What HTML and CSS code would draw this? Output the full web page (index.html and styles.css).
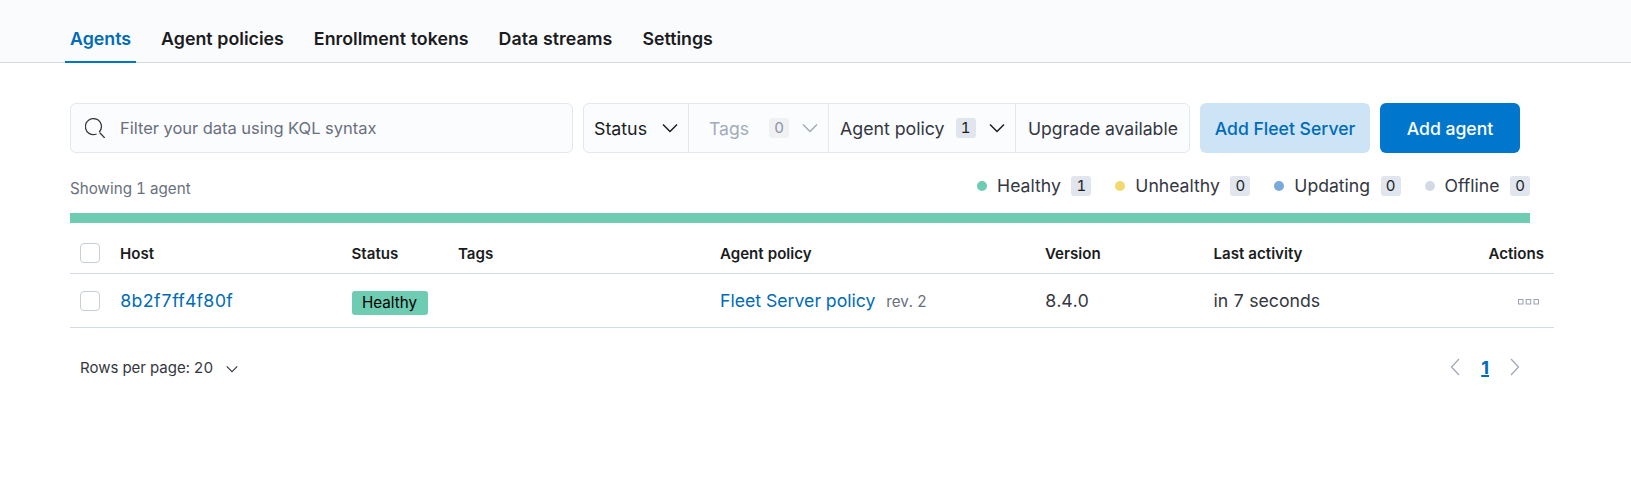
FILE: index.html
```html
<!DOCTYPE html>
<html lang="en">

<head>
  <meta charset="UTF-8">
  <title>Agents - Fleet</title>
  <link rel="stylesheet" href="styles.css">
</head>

<body>
  <nav class="tabs">
    <a class="tab tab-active">Agents</a>
    <a class="tab">Agent policies</a>
    <a class="tab">Enrollment tokens</a>
    <a class="tab">Data streams</a>
    <a class="tab">Settings</a>
  </nav>

  <main class="content">
    <div class="toolbar">
      <div class="search">
        <svg class="search-icon" viewBox="0 0 20 20" fill="none" stroke="#343741" stroke-width="1.3">
          <path d="M14.2 14.2A8 8 0 1 0 11.6 16" />
          <path d="M14.8 14.8l5 5.2" />
        </svg>
        <span class="placeholder">Filter your data using KQL syntax</span>
      </div>
      <div class="filters">
        <div class="filter filter-status"><span>Status</span>
          <svg class="chev" viewBox="0 0 16 10"><path d="M1 1.5l7 7 7-7" /></svg>
        </div>
        <div class="filter filter-tags filter-off"><span>Tags</span><span class="count count-off">0</span>
          <svg class="chev" viewBox="0 0 16 10"><path d="M1 1.5l7 7 7-7" /></svg>
        </div>
        <div class="filter filter-policy"><span>Agent policy</span><span class="count">1</span>
          <svg class="chev" viewBox="0 0 16 10"><path d="M1 1.5l7 7 7-7" /></svg>
        </div>
        <div class="filter filter-upgrade">Upgrade available</div>
      </div>
      <button class="btn btn-light">Add Fleet Server</button>
      <button class="btn btn-primary">Add agent</button>
    </div>

    <div class="summary">
      <span class="showing">Showing 1 agent</span>
      <div class="legend">
        <span class="legend-item"><i class="dot dot-green"></i>Healthy<b class="count">1</b></span>
        <span class="legend-item"><i class="dot dot-yellow"></i>Unhealthy<b class="count">0</b></span>
        <span class="legend-item"><i class="dot dot-blue"></i>Updating<b class="count">0</b></span>
        <span class="legend-item"><i class="dot dot-grey"></i>Offline<b class="count">0</b></span>
      </div>
    </div>
    <div class="status-bar"></div>

    <div class="row row-head">
      <span class="checkbox"></span>
      <span>Host</span>
      <span>Status</span>
      <span>Tags</span>
      <span>Agent policy</span>
      <span>Version</span>
      <span>Last activity</span>
      <span class="actions">Actions</span>
    </div>
    <div class="row row-body">
      <span class="checkbox"></span>
      <a class="link link-host">8b2f7ff4f80f</a>
      <span><span class="badge">Healthy</span></span>
      <span></span>
      <span><a class="link">Fleet Server policy</a> <small class="rev">rev. 2</small></span>
      <span>8.4.0</span>
      <span>in 7 seconds</span>
      <span class="actions">
        <svg class="dots" viewBox="0 0 21 6" fill="none" stroke="#98a2b3">
          <rect x="0.5" y="0.5" width="4.5" height="4.5" />
          <rect x="8.2" y="0.5" width="4.5" height="4.5" />
          <rect x="16" y="0.5" width="4.5" height="4.5" />
        </svg>
      </span>
    </div>

    <div class="table-foot">
      <div class="rows-per-page">Rows per page: 20
        <svg class="chev chev-small" viewBox="0 0 16 10"><path d="M1 1.5l7 7 7-7" /></svg>
      </div>
      <div class="pager">
        <svg class="pager-arrow" viewBox="0 0 10 18"><path d="M9 1L1.5 9 9 17" /></svg>
        <a class="page-current">1</a>
        <svg class="pager-arrow" viewBox="0 0 10 18"><path d="M1 1l7.5 8L1 17" /></svg>
      </div>
    </div>
  </main>
</body>

</html>
```

FILE: styles.css
```css
* {
  box-sizing: border-box;
}

body {
  margin: 0;
  background: #fff;
  color: #343741;
  font-family: 'Inter', sans-serif;
  font-size: 17.6px;
  font-variant-numeric: tabular-nums;
}

.tabs {
  display: flex;
  gap: 20px;
  height: 63px;
  padding: 0 0 0 65px;
  background: #fafbfd;
  border-bottom: 1px solid #d3dae6;
}

.tab {
  height: 63px;
  padding: 25px 5px 0;
  color: #1a1c21;
  font-size: 17.8px;
  font-weight: 600;
  line-height: 28px;
}

.tab-active {
  color: #006bb8;
  border-bottom: 2px solid #0077cc;
}

.content {
  padding: 40px 77px 0 70px;
}

.toolbar {
  display: flex;
  height: 50px;
}

.search {
  display: flex;
  align-items: center;
  width: 503px;
  margin-right: 10px;
  padding-left: 14px;
  background: #fbfcfd;
  border: 1px solid #e3e7ef;
  border-radius: 6px;
  color: #69707d;
  font-size: 16.5px;
}

.search-icon {
  width: 20px;
  height: 20px;
  margin-right: 15px;
}

.filters {
  display: flex;
  margin-right: 10px;
  background: #fbfcfd;
  border: 1px solid #e3e7ef;
  border-radius: 6px;
  color: #343741;
}

.filter {
  display: flex;
  align-items: center;
  height: 100%;
  padding: 0 10px;
  border-right: 1px solid #e3e7ef;
  white-space: nowrap;
}

.filter:last-child {
  border-right: none;
}

.filter-status {
  width: 105px;
  color: #1a1c21;
  font-size: 17.8px;
}

.filter-tags {
  width: 140px;
  padding-left: 20px;
}

.filter-policy {
  width: 187px;
  padding-left: 11px;
  font-size: 17.8px;
}

.filter-upgrade {
  width: 173px;
  padding-left: 12px;
}

.filter-off {
  color: #a2abba;
}

.chev {
  width: 16px;
  height: 10px;
  margin-left: auto;
  fill: none;
  stroke: #1a1c21;
  stroke-width: 1.5;
}

.filter-off .chev {
  stroke: #a2abba;
}

.chev-small {
  width: 12px;
  height: 8px;
  margin-left: 9px;
  stroke: #343741;
}

.count {
  display: inline-block;
  min-width: 20px;
  height: 20px;
  margin-left: 11px;
  background: #e0e5ee;
  border-radius: 3px;
  color: #1a1c21;
  font-size: 15px;
  font-weight: 400;
  line-height: 20px;
  text-align: center;
}

.count-off {
  background: #eff1f5;
  color: #8a92a0;
}

.filter-tags .count {
  margin-left: 20px;
}

.btn {
  height: 50px;
  border: none;
  border-radius: 6px;
  font-family: inherit;
  font-size: 17.6px;
  font-weight: 500;
}

.btn-light {
  width: 170px;
  margin-right: 10px;
  background: #cce4f5;
  color: #006bb8;
}

.btn-primary {
  width: 140px;
  background: #0077cc;
  color: #fff;
}

.summary {
  display: flex;
  justify-content: space-between;
  align-items: center;
  width: 1460px;
  height: 60px;
  padding-top: 5px;
}

.showing {
  padding-top: 6px;
  color: #69707d;
  font-size: 15.2px;
}

.legend {
  display: flex;
  gap: 24px;
}

.legend .count {
  margin-left: 10.5px;
}

.legend-item {
  display: flex;
  align-items: center;
}

.dot {
  width: 10px;
  height: 10px;
  margin-right: 10px;
  border-radius: 50%;
}

.dot-green {
  background: #6dccb1;
}

.dot-yellow {
  background: #f1d86f;
}

.dot-blue {
  background: #79aad9;
}

.dot-grey {
  background: #d3dae6;
}

.status-bar {
  width: 1460px;
  height: 10px;
  background: #6dccb1;
}

.row {
  display: grid;
  grid-template-columns: 40px 231.5px 106.5px 262px 325px 168.5px 1fr 90px;
  align-items: center;
  width: 1484px;
  padding-left: 10px;
  border-bottom: 1px solid #d3dae6;
}

.row-head {
  height: 41px;
  margin-top: 10px;
  color: #1a1c21;
  font-size: 15.1px;
  font-weight: 600;
}

.row-body {
  height: 54px;
  font-size: 17.7px;
}

.checkbox {
  display: block;
  width: 20px;
  height: 20px;
  background: #fff;
  border: 1px solid #c9ced6;
  border-radius: 4px;
}

.link {
  color: #006bb8;
}

.link-host {
  letter-spacing: 0.1px;
}

.badge {
  display: inline-block;
  width: 76px;
  height: 24px;
  margin-top: 4px;
  background: #6dccb1;
  border-radius: 3px;
  color: #000;
  font-size: 15.2px;
  line-height: 24px;
  text-align: center;
}

.rev {
  margin-left: 6px;
  color: #69707d;
  font-size: 15.2px;
}

.actions {
  padding-right: 10px;
  text-align: right;
  white-space: nowrap;
}

.dots {
  display: block;
  width: 21px;
  height: 6px;
  margin: 2px 5px 0 auto;
}

.table-foot {
  display: flex;
  justify-content: space-between;
  align-items: center;
  width: 1460px;
  height: 80px;
  padding: 0 10px 2px;
  font-size: 15px;
}

.pager {
  display: flex;
  align-items: center;
  gap: 21px;
}

.pager-arrow {
  width: 10px;
  height: 18px;
  fill: none;
  stroke: #a2abba;
  stroke-width: 1.3;
}

.page-current {
  color: #006bb8;
  font-size: 18px;
  font-weight: 700;
  font-variant-numeric: normal;
  text-decoration: underline;
  text-decoration-thickness: 2px;
}
```
